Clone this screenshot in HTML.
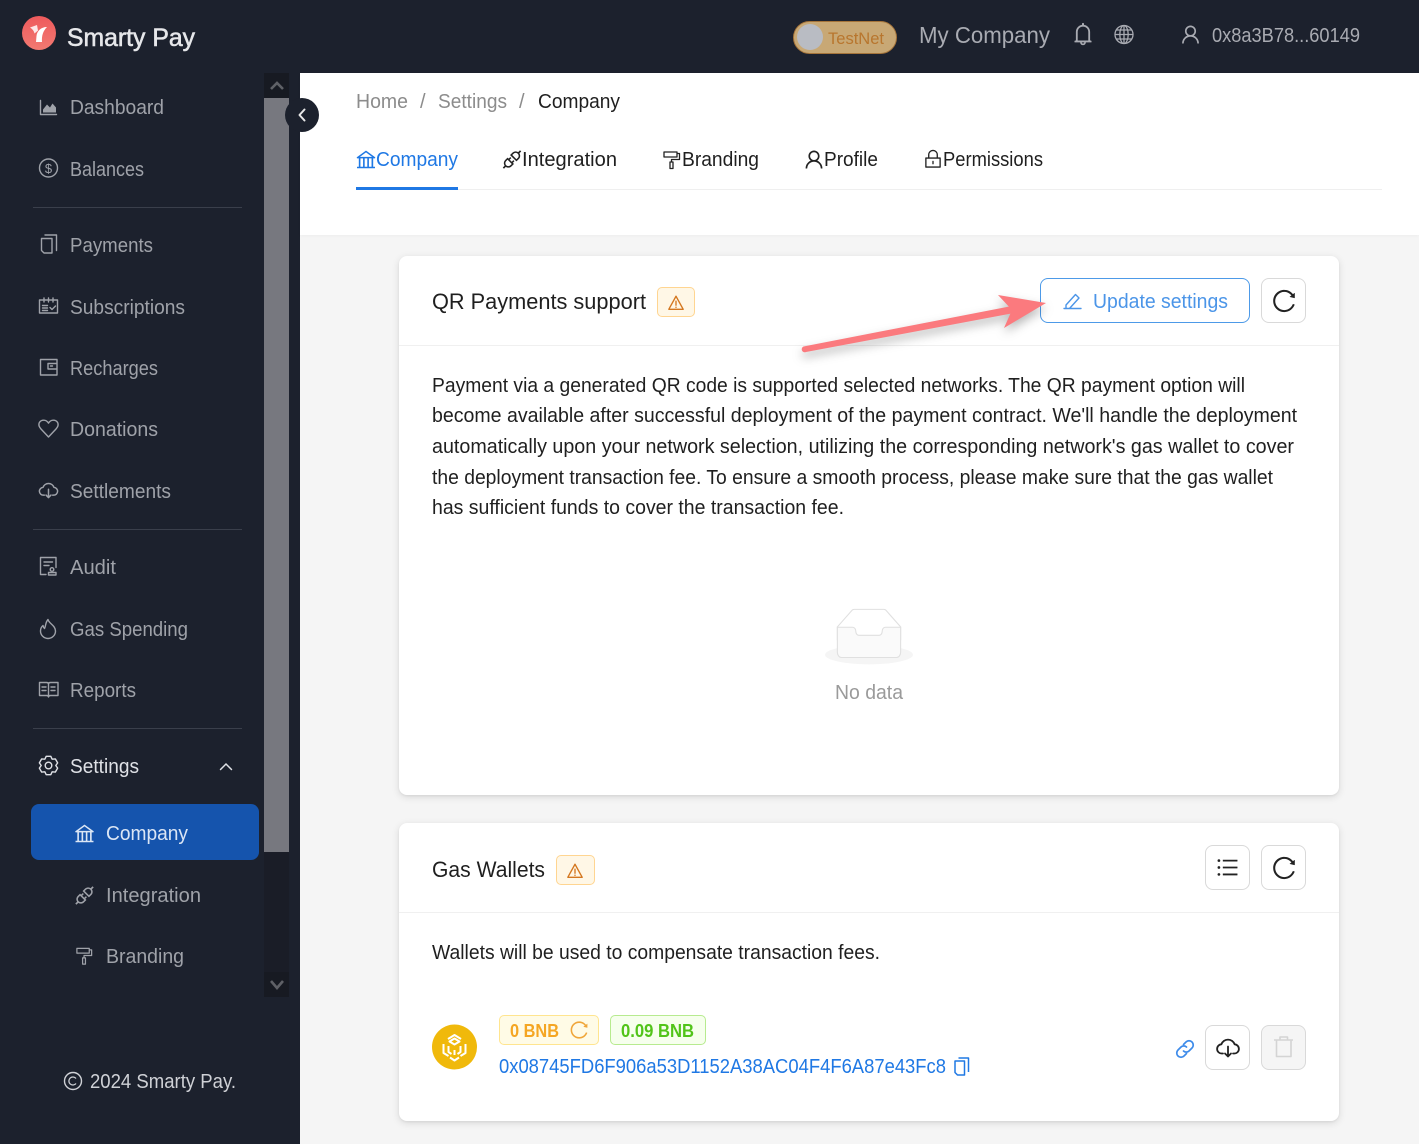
<!DOCTYPE html>
<html lang="en"><head><meta charset="utf-8"><title>Smarty Pay - Company</title>
<style>
html,body{margin:0;padding:0;width:1419px;height:1144px;overflow:hidden;background:#f5f5f5;font-family:"Liberation Sans",sans-serif}
.a{position:absolute;box-sizing:border-box}
svg{position:absolute;left:0;top:0}
text{font-family:"Liberation Sans",sans-serif;font-size:20px}
.n{fill:#9fa2a9}
.d{fill:#1f1f1f}
.s{fill:none;stroke:#9fa2a9;stroke-width:1.4;stroke-linecap:round;stroke-linejoin:round}
</style></head>
<body>
<div class="a" style="left:0;top:0;width:1419px;height:73px;background:#1c212d"></div>
<div class="a" style="left:0;top:0;width:300px;height:1144px;background:#1c212d"></div>
<div class="a" style="left:300px;top:73px;width:1119px;height:162px;background:#fff;box-shadow:0 1px 3px rgba(0,0,0,.03)"></div>
<div class="a" style="left:264px;top:73px;width:25px;height:25px;background:#171a22"></div>
<div class="a" style="left:264px;top:98px;width:25px;height:754px;background:#77787f"></div>
<div class="a" style="left:264px;top:852px;width:25px;height:120px;background:#1a1d27"></div>
<div class="a" style="left:264px;top:972px;width:25px;height:25px;background:#171a22"></div>
<div class="a" style="left:33px;top:207px;width:209px;height:1px;background:#3a3f4b"></div>
<div class="a" style="left:33px;top:529px;width:209px;height:1px;background:#3a3f4b"></div>
<div class="a" style="left:33px;top:728px;width:209px;height:1px;background:#3a3f4b"></div>
<div class="a" style="left:31px;top:804px;width:228px;height:56px;background:#1554ad;border-radius:8px"></div>
<div class="a" style="left:285px;top:98px;width:34px;height:34px;background:#1c212d;border-radius:50%"></div>
<div class="a" style="left:793px;top:21px;width:104px;height:33px;background:#c8a875;border:1.5px solid #a5743a;border-radius:17px"></div>
<div class="a" style="left:797px;top:24px;width:26px;height:26px;background:#b9bcc3;border-radius:50%"></div>
<div class="a" style="left:356px;top:189px;width:1026px;height:1px;background:#efefef"></div>
<div class="a" style="left:356px;top:187px;width:102px;height:3px;background:#1f78e4"></div>

<div class="a" style="left:399px;top:256px;width:940px;height:539px;background:#fff;border-radius:8px;box-shadow:0 1px 2px rgba(0,0,0,.05),0 2px 8px rgba(0,0,0,.12)"></div>
<div class="a" style="left:399px;top:345px;width:940px;height:1px;background:#f0f0f0"></div>
<div class="a" style="left:657px;top:287px;width:38px;height:30px;background:#fff7e6;border:1px solid #ffd591;border-radius:5px"></div>
<div class="a" style="left:1040px;top:278px;width:210px;height:45px;border:1px solid #4d9ae8;border-radius:8px;background:#fff"></div>
<div class="a" style="left:1261px;top:278px;width:45px;height:45px;border:1px solid #d9d9d9;border-radius:8px;background:#fff"></div>

<div class="a" style="left:399px;top:823px;width:940px;height:298px;background:#fff;border-radius:8px;box-shadow:0 1px 2px rgba(0,0,0,.05),0 2px 8px rgba(0,0,0,.12)"></div>
<div class="a" style="left:399px;top:912px;width:940px;height:1px;background:#f0f0f0"></div>
<div class="a" style="left:556px;top:855px;width:39px;height:30px;background:#fff7e6;border:1px solid #ffd591;border-radius:5px"></div>
<div class="a" style="left:1205px;top:845px;width:45px;height:45px;border:1px solid #d9d9d9;border-radius:8px;background:#fff"></div>
<div class="a" style="left:1261px;top:845px;width:45px;height:45px;border:1px solid #d9d9d9;border-radius:8px;background:#fff"></div>
<div class="a" style="left:1205px;top:1025px;width:45px;height:45px;border:1px solid #d9d9d9;border-radius:8px;background:#fff"></div>
<div class="a" style="left:1261px;top:1025px;width:45px;height:45px;border:1px solid #d9d9d9;border-radius:8px;background:#f5f5f5"></div>
<div class="a" style="left:499px;top:1015px;width:100px;height:30px;background:#fffbe6;border:1px solid #ffe58f;border-radius:5px"></div>
<div class="a" style="left:610px;top:1015px;width:96px;height:30px;background:#f6ffed;border:1px solid #b7eb8f;border-radius:5px"></div>

<svg width="1419" height="1144" viewBox="0 0 1419 1144" xmlns="http://www.w3.org/2000/svg">
<defs>
<symbol id="reload" viewBox="0 0 1024 1024"><path d="M909.1 209.3l-56.4 44.1C775.8 155.1 656.2 92 521.9 92 290 92 102.3 279.5 102 511.5 101.7 743.7 289.8 932 521.9 932c181.3 0 335.8-115 394.6-276.1 1.5-4.2-.7-8.9-4.9-10.3l-56.7-19.5a8 8 0 0 0-10.1 4.8c-1.8 5-3.8 10-5.9 14.9-17.3 41-42.1 77.8-73.7 109.4A344.77 344.77 0 0 1 655.9 829c-42.3 17.9-87.4 27-133.8 27-46.5 0-91.5-9.1-133.8-27A341.5 341.5 0 0 1 279 755.2a342.16 342.16 0 0 1-73.7-109.4c-17.9-42.4-27-87.4-27-133.9s9.1-91.5 27-133.9c17.3-41 42.1-77.8 73.7-109.4 31.6-31.6 68.4-56.4 109.3-73.8 42.3-17.9 87.4-27 133.8-27 46.5 0 91.5 9.1 133.8 27a341.5 341.5 0 0 1 109.3 73.8c9.9 9.9 19.2 20.4 27.8 31.4l-60.2 47a8 8 0 0 0 3 14.1l175.6 43c5 1.2 9.9-2.6 9.9-7.7l.8-180.9c-.1-6.6-7.8-10.3-13-6.2z"/></symbol>
<symbol id="bank" viewBox="0 0 1024 1024"><path d="M894 462c30.9 0 43.8-39.7 18.7-58L530.8 126.2a31.81 31.81 0 0 0-37.6 0L111.3 404c-25.1 18.2-12.2 58 18.8 58H192v374h-72c-4.4 0-8 3.6-8 8v52c0 4.4 3.6 8 8 8h784c4.4 0 8-3.6 8-8v-52c0-4.4-3.6-8-8-8h-72V462h62zM512 196.7l271.1 197.2H240.9L512 196.7zM264 462h117v374H264V462zm189 0h117v374H453V462zm189 0h117v374H642V462z"/></symbol>
<symbol id="api" viewBox="0 0 1024 1024"><path d="M917.7 148.8l-42.4-42.4c-1.6-1.6-3.6-2.3-5.7-2.3s-4.1.8-5.7 2.3l-76.1 76.1a199.27 199.27 0 0 0-112.1-34.3c-51.2 0-102.4 19.5-141.5 58.6L432.3 308.7a8.03 8.03 0 0 0 0 11.3L704 591.7c1.6 1.6 3.6 2.3 5.7 2.3 2 0 4.1-.8 5.7-2.3l101.9-101.9c68.9-69 77-175.7 24.3-253.5l76.1-76.1c3.1-3.2 3.1-8.3 0-11.4zM769.1 441.7l-59.4 59.4-186.8-186.8 59.4-59.4c24.9-24.9 58.1-38.7 93.4-38.7 35.3 0 68.4 13.7 93.4 38.7 24.9 24.9 38.7 58.1 38.7 93.4 0 35.3-13.8 68.4-38.7 93.4zm-190.2 105a8.03 8.03 0 0 0-11.3 0L501 613.3 410.7 523l66.7-66.7c3.1-3.1 3.1-8.2 0-11.3L441 408.6a8.03 8.03 0 0 0-11.3 0L363 475.3l-43-43a7.85 7.85 0 0 0-5.7-2.3c-2 0-4.1.8-5.7 2.3L206.8 534.2c-68.9 69-77 175.7-24.3 253.5l-76.1 76.1a8.03 8.03 0 0 0 0 11.3l42.4 42.4c1.6 1.6 3.6 2.3 5.7 2.3s4.1-.8 5.7-2.3l76.1-76.1c33.7 22.9 72.9 34.3 112.1 34.3 51.2 0 102.4-19.5 141.5-58.6l101.9-101.9c3.1-3.1 3.1-8.2 0-11.3l-43-43 66.7-66.7c3.1-3.1 3.1-8.2 0-11.3l-36.6-36.2zM441.7 769.1a131.32 131.32 0 0 1-93.4 38.7c-35.3 0-68.4-13.7-93.4-38.7a131.32 131.32 0 0 1-38.7-93.4c0-35.3 13.7-68.4 38.7-93.4l59.4-59.4 186.8 186.8-59.4 59.4z"/></symbol>
<symbol id="user" viewBox="0 0 1024 1024"><path d="M858.5 763.6a374 374 0 0 0-80.6-119.5 375.63 375.63 0 0 0-119.5-80.6c-.4-.2-.8-.3-1.2-.5C719.5 518 760 444.7 760 362c0-137-111-248-248-248S264 225 264 362c0 82.7 40.5 156 102.8 201.1-.4.2-.8.3-1.2.5-44.8 18.9-85 46-119.5 80.6a375.63 375.63 0 0 0-80.6 119.5A371.7 371.7 0 0 0 136 901.8a8 8 0 0 0 8 8.2h60c4.4 0 7.9-3.5 8-7.8 2-77.2 33-149.5 87.8-204.3 56.7-56.7 132-87.9 212.2-87.9s155.5 31.2 212.2 87.9C779 752.7 810 825 812 902.2c.1 4.4 3.6 7.8 8 7.8h60a8 8 0 0 0 8-8.2c-1-47.8-10.9-94.3-29.5-138.2zM512 534c-45.9 0-89.1-17.9-121.6-50.4S340 407.9 340 362c0-45.9 17.9-89.1 50.4-121.6S466.1 190 512 190s89.1 17.9 121.6 50.4S684 316.1 684 362c0 45.9-17.9 89.1-50.4 121.6S557.9 534 512 534z"/></symbol>
<symbol id="list" viewBox="0 0 1024 1024"><path d="M912 192H328c-4.4 0-8 3.6-8 8v56c0 4.4 3.6 8 8 8h584c4.4 0 8-3.6 8-8v-56c0-4.4-3.6-8-8-8zm0 284H328c-4.4 0-8 3.6-8 8v56c0 4.4 3.6 8 8 8h584c4.4 0 8-3.6 8-8v-56c0-4.4-3.6-8-8-8zm0 284H328c-4.4 0-8 3.6-8 8v56c0 4.4 3.6 8 8 8h584c4.4 0 8-3.6 8-8v-56c0-4.4-3.6-8-8-8zM104 228a56 56 0 1 0 112 0 56 56 0 1 0-112 0zm0 284a56 56 0 1 0 112 0 56 56 0 1 0-112 0zm0 284a56 56 0 1 0 112 0 56 56 0 1 0-112 0z"/></symbol>
<symbol id="bell" viewBox="0 0 1024 1024"><path d="M816 768h-24V428c0-141.1-104.3-257.7-240-277.1V112c0-22.1-17.9-40-40-40s-40 17.9-40 40v38.9c-135.7 19.4-240 136-240 277.1v340h-24c-17.7 0-32 14.3-32 32v32c0 4.4 3.6 8 8 8h216c0 61.8 50.2 112 112 112s112-50.2 112-112h216c4.4 0 8-3.6 8-8v-32c0-17.7-14.3-32-32-32zM512 888c-26.5 0-48-21.5-48-48h96c0 26.5-21.5 48-48 48zM304 768V428c0-55.6 21.6-107.8 60.9-147.1S456.4 220 512 220c55.6 0 107.8 21.6 147.1 60.9S720 372.4 720 428v340H304z"/></symbol>
<symbol id="roller" viewBox="0 0 20 20"><path fill="none" stroke="currentColor" stroke-width="1.3" stroke-linejoin="round" stroke-linecap="round" d="M2 2h13v5H2zM15 3.500h2.500v6H9.500v2.500M8 12h3v6.500H8z"/></symbol>
<symbol id="lock" viewBox="0 0 20 20"><path fill="none" stroke="currentColor" stroke-width="1.400" stroke-linejoin="round" stroke-linecap="round" d="M2.500 9h15v9.500h-15zM5.500 9V5.500a4.500 4.500 0 0 1 9 0V9M10 12.500v2.500"/></symbol>
<symbol id="warn" viewBox="0 0 20 20"><path fill="none" stroke="currentColor" stroke-width="1.500" stroke-linejoin="round" stroke-linecap="round" d="M10 2.500 18 17H2zM10 8v4.500M10 14.600v.3"/></symbol>
<symbol id="cloud" viewBox="0 0 24 24"><path fill="none" stroke="currentColor" stroke-width="1.800" stroke-linejoin="round" stroke-linecap="round" d="M7 17.500H6a4.600 4.600 0 0 1-.6-9.200 7 7 0 0 1 13.200 0 4.600 4.600 0 0 1-.6 9.200h-1M12 10.500v10m-3-3 3 3 3-3"/></symbol>
<linearGradient id="lg" x1="0" y1="0" x2="0" y2="1"><stop offset="0" stop-color="#ee5a5c"/><stop offset="1" stop-color="#f27a72"/></linearGradient>
</defs>

<!-- logo -->
<circle cx="39" cy="33" r="17" fill="url(#lg)"/>
<path d="M47 27C41 27 37 31 36.500 36L36 42h6C41.500 36 43 31 47 27z" fill="#fff"/>
<path d="M30 27.500 37 25l1 5.500-3.500 3C34 31 32.500 29 30 27.500z" fill="#fff" opacity=".85"/>
<text x="67" y="46" style="font-size:25px" fill="#e6e7ea" stroke="#e6e7ea" stroke-width=".55" textLength="128" lengthAdjust="spacingAndGlyphs">Smarty Pay</text>

<!-- header right -->
<text x="828" y="44" style="font-size:17px" fill="#b8762e" textLength="56" lengthAdjust="spacingAndGlyphs">TestNet</text>
<text x="919" y="43" style="font-size:23px" fill="#a9abb2" textLength="131" lengthAdjust="spacingAndGlyphs">My Company</text>
<use href="#bell" x="1070" y="21" width="26" height="26" fill="#a9abb2"/>
<g fill="none" stroke="#a9abb2" stroke-width="1.300"><circle cx="1124" cy="34.500" r="9"/><ellipse cx="1124" cy="34.500" rx="4.200" ry="9"/><path d="M1124 25.500v18M1115 34.500h18M1116.200 30h15.600M1116.200 39h15.600"/></g>
<use href="#user" x="1179" y="23" width="23" height="23" fill="#a9abb2"/>
<text x="1212" y="42" class="n" style="fill:#a9abb2" textLength="148" lengthAdjust="spacingAndGlyphs">0x8a3B78...60149</text>

<!-- collapse + scrollbar arrows -->
<path d="M304.500 109.500 299.500 115l5 5.500" fill="none" stroke="#e8e8e8" stroke-width="2" stroke-linecap="round" stroke-linejoin="round"/>
<path d="M271 89l6-6 6 6" fill="none" stroke="#5f6167" stroke-width="2.600"/>
<path d="M271 981l6 7 6-7" fill="none" stroke="#5f6167" stroke-width="2.600"/>

<!-- sidebar icons -->
<path class="s" d="M40.500 100.500v14h16"/><path d="M43 112.500v-3l4-5 3 3 2.500-4 3.500 4v5z" fill="#9fa2a9"/>
<circle class="s" cx="48.500" cy="168" r="9"/><text x="48.500" y="173" text-anchor="middle" style="font-size:13px" class="n">$</text>
<path class="s" d="M45 235h11.500v15.500M41.500 238.500H52v14.500h-8l-2.500-2.500z"/>
<path class="s" d="M39.500 300h18v13h-18zM44 298v4M48.500 298v4M53 298v4M42.500 305.500h5M42.500 308h5M42.500 310.500h5M50 307.500l2 2 3.500-3.500"/>
<path class="s" d="M40.500 359.500h16.500v15.500H40.500zM57 363.500h-9v5.500h9M50.500 366h2"/>
<path class="s" d="M48.500 437 41 429c-4.500-5-1-8.800 2.800-8.800 2 0 3.500 1 4.700 3 1.200-2 2.700-3 4.700-3 3.800 0 7.300 3.800 2.800 8.800z"/>
<use href="#cloud" x="38.500" y="480.500" width="20" height="20" color="#9fa2a9"/>
<path class="s" d="M46 574.500h-5.500v-17h15.500v10M44 562h8.500M44 565.500h5"/><circle class="s" cx="52" cy="569.500" r="1.800"/><path class="s" d="M48.500 575v-2.500h7.500v2.500z"/>
<path class="s" d="M48 619.500c.8 4 7.500 6 7.500 11.500a7.500 7.500 0 0 1-15 0c0-2.500 1-4.300 2.500-5.500.2 1.500.7 2.300 1.500 3 1.500-3 .8-6 3.500-9z"/>
<path class="s" d="M39.500 682.500h7c1 0 2 .5 2 1.500 0-1 1-1.500 2-1.500h7.500v13h-7.500c-1 0-2 .5-2 1.500 0-1-1-1.500-2-1.500h-7zM48.500 684v13M42 687h4M42 690.500h4M51 687h4M51 690.500h4"/>
<g transform="translate(48.500 765.500)"><path fill="none" stroke="#dfe1e6" stroke-width="1.400" stroke-linejoin="round" d="M7.300 0 9.130 2.620 6.830 6.600 3.650 6.320 2.300 9.220-2.300 9.220-3.650 6.320-6.830 6.600-9.130 2.620-7.300 0-9.130-2.620-6.830-6.600-3.650-6.320-2.300-9.220 2.300-9.220 3.650-6.320 6.830-6.600 9.130-2.620z"/><circle r="3.300" fill="none" stroke="#dfe1e6" stroke-width="1.400"/></g>
<path d="M220.500 769.500 226 764l5.500 5.500" fill="none" stroke="#dfe1e6" stroke-width="1.500" stroke-linecap="round"/>
<use href="#bank" x="73" y="822" width="23" height="23" fill="#dbe6f5"/>
<use href="#api" x="73" y="884" width="23" height="23" fill="#9fa2a9"/>
<use href="#roller" x="75" y="946" width="19" height="20" color="#9fa2a9"/>

<!-- sidebar text -->
<g class="n">
<text x="70" y="114" textLength="94" lengthAdjust="spacingAndGlyphs">Dashboard</text>
<text x="70" y="176" textLength="74" lengthAdjust="spacingAndGlyphs">Balances</text>
<text x="70" y="252" textLength="83" lengthAdjust="spacingAndGlyphs">Payments</text>
<text x="70" y="314" textLength="115" lengthAdjust="spacingAndGlyphs">Subscriptions</text>
<text x="70" y="375" textLength="88" lengthAdjust="spacingAndGlyphs">Recharges</text>
<text x="70" y="436" textLength="88" lengthAdjust="spacingAndGlyphs">Donations</text>
<text x="70" y="498" textLength="101" lengthAdjust="spacingAndGlyphs">Settlements</text>
<text x="70" y="574" textLength="46" lengthAdjust="spacingAndGlyphs">Audit</text>
<text x="70" y="636" textLength="118" lengthAdjust="spacingAndGlyphs">Gas Spending</text>
<text x="70" y="697" textLength="66" lengthAdjust="spacingAndGlyphs">Reports</text>
<text x="106" y="902" textLength="95" lengthAdjust="spacingAndGlyphs">Integration</text>
<text x="106" y="963" textLength="78" lengthAdjust="spacingAndGlyphs">Branding</text>
</g>
<text x="70" y="773" fill="#dfe1e6" textLength="69" lengthAdjust="spacingAndGlyphs">Settings</text>
<text x="106" y="840" fill="#dbe6f5" textLength="82" lengthAdjust="spacingAndGlyphs">Company</text>
<circle cx="73" cy="1081" r="8.500" fill="none" stroke="#cfd1d6" stroke-width="1.400"/>
<path d="M76 1078.500a4 4 0 1 0 0 5" fill="none" stroke="#cfd1d6" stroke-width="1.300"/>
<text x="90" y="1088" fill="#cfd1d6" textLength="146" lengthAdjust="spacingAndGlyphs">2024 Smarty Pay.</text>

<!-- breadcrumb -->
<g fill="#8c8c8c">
<text x="356" y="108" textLength="52" lengthAdjust="spacingAndGlyphs">Home</text>
<text x="420" y="108">/</text>
<text x="438" y="108" textLength="69" lengthAdjust="spacingAndGlyphs">Settings</text>
<text x="519" y="108">/</text>
</g>
<text x="538" y="108" class="d" textLength="82" lengthAdjust="spacingAndGlyphs">Company</text>

<!-- tabs -->
<use href="#bank" x="354.500" y="148" width="23" height="23" fill="#1f78e4"/>
<text x="376" y="166" fill="#1f78e4" textLength="82" lengthAdjust="spacingAndGlyphs">Company</text>
<use href="#api" x="500.500" y="148" width="23" height="23" fill="#222"/>
<text x="522" y="166" class="d" textLength="95" lengthAdjust="spacingAndGlyphs">Integration</text>
<use href="#roller" x="662" y="150" width="20" height="20" color="#222"/>
<text x="682" y="166" class="d" textLength="77" lengthAdjust="spacingAndGlyphs">Branding</text>
<use href="#user" x="802.500" y="148" width="23" height="23" fill="#222"/>
<text x="824" y="166" class="d" textLength="54" lengthAdjust="spacingAndGlyphs">Profile</text>
<use href="#lock" x="923.500" y="149.500" width="19" height="19" color="#222"/>
<text x="943" y="166" class="d" textLength="100" lengthAdjust="spacingAndGlyphs">Permissions</text>

<!-- card 1 -->
<text x="432" y="309" class="d" style="font-size:22px" textLength="214" lengthAdjust="spacingAndGlyphs">QR Payments support</text>
<use href="#warn" x="667" y="294" width="18" height="18" color="#d4771f"/>
<path d="M1064 308.500h17M1066 305l9.500-10.500 3.500 3.500-9.500 10.500h-3.500z" fill="none" stroke="#4b95e8" stroke-width="1.400" stroke-linecap="round" stroke-linejoin="round"/>
<text x="1093" y="308" fill="#4b95e8" textLength="135" lengthAdjust="spacingAndGlyphs">Update settings</text>
<use href="#reload" x="1270.500" y="287.500" width="27" height="27" fill="#222"/>

<!-- arrow -->
<g style="filter:drop-shadow(0 5px 5px rgba(0,0,0,.28))">
<path d="M803.500 346.500 1012 306l2 7L806 352a2.800 2.800 0 0 1-2.500-5.500z" fill="#fb7a7e"/>
<path d="M998 295 1046 303 1004 328 1012 310z" fill="#fb7a7e"/>
</g>

<g class="d">
<text x="432" y="392" textLength="813" lengthAdjust="spacingAndGlyphs">Payment via a generated QR code is supported selected networks. The QR payment option will</text>
<text x="432" y="422" textLength="865" lengthAdjust="spacingAndGlyphs">become available after successful deployment of the payment contract. We'll handle the deployment</text>
<text x="432" y="453" textLength="862" lengthAdjust="spacingAndGlyphs">automatically upon your network selection, utilizing the corresponding network's gas wallet to cover</text>
<text x="432" y="484" textLength="841" lengthAdjust="spacingAndGlyphs">the deployment transaction fee. To ensure a smooth process, please make sure that the gas wallet</text>
<text x="432" y="514" textLength="412" lengthAdjust="spacingAndGlyphs">has sufficient funds to cover the transaction fee.</text>
</g>

<!-- empty -->
<g transform="translate(825 608) scale(1.375)" fill="none" fill-rule="evenodd"><g transform="translate(0 1)"><ellipse fill="#f5f5f5" cx="32" cy="33" rx="32" ry="7"/><g fill-rule="nonzero" stroke="#e0e0e0" stroke-width=".8"><path d="M55 12.760 44.854 1.258C44.367.474 43.656 0 42.907 0H21.093c-.749 0-1.460.474-1.947 1.257L9 12.761V22h46v-9.240z"/><path d="M41.613 15.931c0-1.605.994-2.930 2.227-2.931H55v18.137C55 33.260 53.680 35 52.050 35h-40.100C10.320 35 9 33.259 9 31.137V13h11.160c1.233 0 2.227 1.323 2.227 2.928v.022c0 1.605 1.005 2.901 2.237 2.901h14.752c1.232 0 2.237-1.308 2.237-2.913v-.007z" fill="#fafafa"/></g></g></g>
<text x="835" y="699" fill="#9a9a9a" textLength="68" lengthAdjust="spacingAndGlyphs">No data</text>

<!-- card 2 -->
<text x="432" y="877" class="d" style="font-size:22px" textLength="113" lengthAdjust="spacingAndGlyphs">Gas Wallets</text>
<use href="#warn" x="566" y="862" width="18" height="18" color="#d4771f"/>
<use href="#list" x="1215" y="855" width="25" height="25" fill="#222"/>
<use href="#reload" x="1270.500" y="854.500" width="27" height="27" fill="#222"/>
<text x="432" y="959" class="d" textLength="448" lengthAdjust="spacingAndGlyphs">Wallets will be used to compensate transaction fees.</text>

<!-- wallet row -->
<circle cx="454.500" cy="1047" r="22.500" fill="#f0b90b"/>
<g fill="none" stroke="#fff" stroke-width="2" stroke-linejoin="round"><path d="M454.500 1038.500l5 3-5 3-5-3zM448 1039l6.500-4 6.500 4M443.500 1044v9l5 3M465.500 1044v9l-5 3M448.500 1046v6l3 2M460.500 1046v6l-3 2M450 1057.500l4.500 3 4.500-3M454.500 1050v5"/></g>
<text x="510" y="1037" style="font-size:18px;font-weight:700" fill="#f5a623" textLength="49" lengthAdjust="spacingAndGlyphs">0 BNB</text>
<use href="#reload" x="568.500" y="1019.500" width="21" height="21" fill="#f0a63a"/>
<text x="621" y="1037" style="font-size:18px;font-weight:700" fill="#52c41a" textLength="73" lengthAdjust="spacingAndGlyphs">0.09 BNB</text>
<text x="499" y="1073" fill="#1f78e4" textLength="447" lengthAdjust="spacingAndGlyphs">0x08745FD6F906a53D1152A38AC04F4F6A87e43Fc8</text>
<path d="M958.500 1058h10v14M955 1061h9.500v14h-7l-2.500-2.500z" fill="none" stroke="#1f78e4" stroke-width="1.500" stroke-linejoin="round"/>
<g fill="none" stroke="#3d8bea" stroke-width="1.700" stroke-linecap="round"><path d="M1183.500 1044.500l2.500-2.500a4 4 0 0 1 6 6l-3 3a4 4 0 0 1-5.500 0"/><path d="M1186.500 1053.500l-2.500 2.500a4 4 0 0 1-6-6l3-3a4 4 0 0 1 5.500 0"/></g>
<use href="#cloud" x="1216" y="1036" width="24" height="24" color="#222"/>
<path d="M1274 1040h19M1280 1040v-3h7.500v3M1276.500 1040v16.500h14.500V1040" fill="none" stroke="#d4d4d4" stroke-width="1.600" stroke-linejoin="round"/>
</svg>
</body></html>
